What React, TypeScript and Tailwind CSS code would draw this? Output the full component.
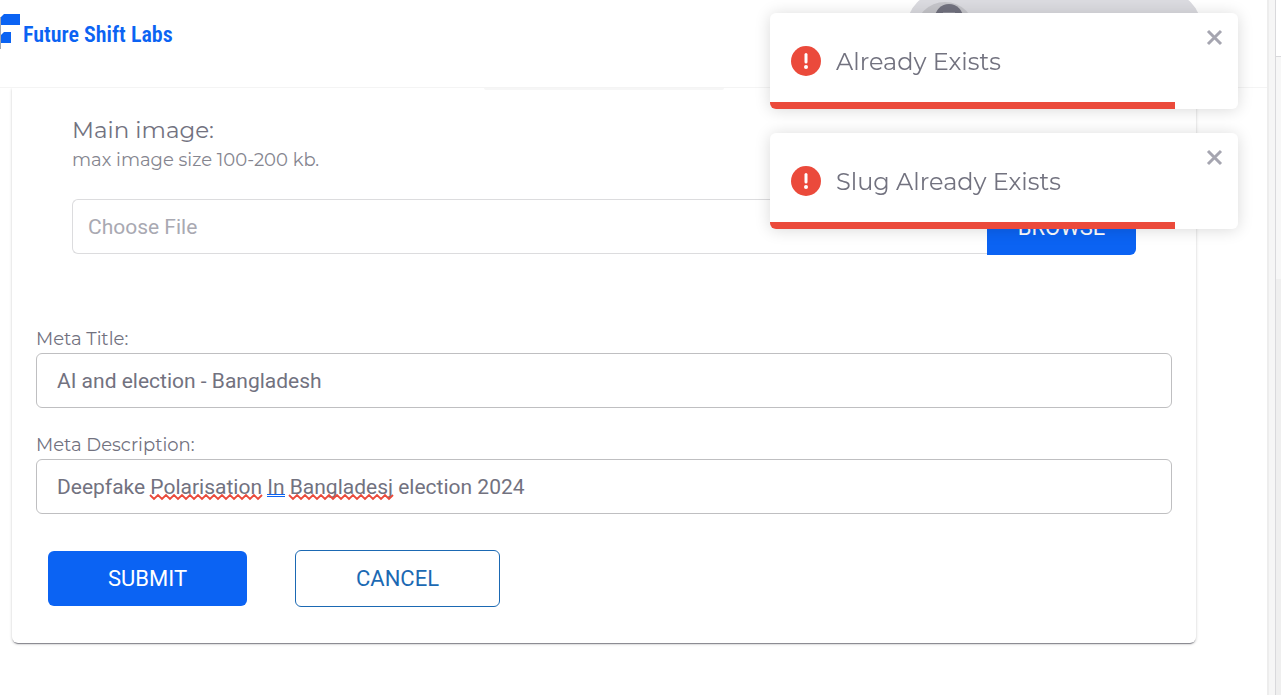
import React from "react";

const sans = "font-['Montserrat','Inter',sans-serif]";
const roboto = "font-['Roboto',sans-serif]";

function Logo() {
  return (
    <a href="#" className="flex items-start text-[#0b63f3]">
      <svg width="21" height="38" viewBox="0 0 21 38" aria-hidden="true">
        <path d="M0.5 4V36" stroke="#a3a6b0" strokeWidth="1" />
        <path d="M4 1H20V12H1V4Z" fill="#0b63f3" />
        <path d="M4 19H11V30H1V22Z" fill="#0b63f3" />
      </svg>
      <span className="ml-0.5 mt-2 whitespace-nowrap font-['Roboto_Condensed','Roboto',sans-serif] text-[22px] font-semibold leading-7">
        Future Shift Labs
      </span>
    </a>
  );
}

function ProfileChip() {
  return (
    <button
      type="button"
      aria-label="Profile"
      className="-mt-2 mr-[66px] flex h-[70px] w-[294px] items-start overflow-hidden rounded-full bg-[#dbdbe0] pl-2"
    >
      <svg width="60" height="70" viewBox="0 -8 60 70" aria-hidden="true">
        <circle cx="30" cy="32" r="30" fill="#c5c5ca" />
        <circle cx="34" cy="18" r="14" fill="#72727f" />
        <path d="M28 12h12v10H28z" fill="#92929c" />
      </svg>
    </button>
  );
}

function Toast({ message }: { message: string }) {
  return (
    <div
      role="alert"
      className="relative flex h-24 items-center overflow-hidden rounded-md bg-white pl-[21px] shadow-[0_1px_16px_rgba(0,0,0,0.15)]"
    >
      <svg width="30" height="30" viewBox="0 0 30 30" aria-hidden="true">
        <circle cx="15" cy="15" r="15" fill="#eb4a3b" />
        <path d="M15 8.5V16" stroke="#fff" strokeWidth="3" strokeLinecap="round" />
        <circle cx="15" cy="21" r="2" fill="#fff" />
      </svg>
      <span className={`${sans} ml-[15px] pt-0.5 text-2xl text-[#72727f]`}>{message}</span>
      <button type="button" aria-label="Close" className="absolute right-[15px] top-4">
        <svg width="17" height="17" viewBox="0 0 17 17" aria-hidden="true">
          <path d="M2 2L15 15M15 2L2 15" stroke="#a5a5b0" strokeWidth="3" />
        </svg>
      </button>
      <div className="absolute bottom-0 left-0 h-[7px] w-[86.6%] bg-[#eb4a3b]" />
    </div>
  );
}

function wave(x: number, end: number) {
  let d = `M${x} 2`;
  let down = true;
  for (let i = x + 4; i <= end; i += 4) {
    d += `L${i} ${down ? 6 : 2}`;
    down = !down;
  }
  return d;
}

function SpellingMarks() {
  return (
    <svg
      className="pointer-events-none absolute left-0 top-[34px]"
      width="500"
      height="8"
      viewBox="0 0 500 8"
      fill="none"
      aria-hidden="true"
    >
      <path d={wave(114, 226)} stroke="#eb4a3b" strokeWidth="1.8" />
      <path d="M231 1.5H249M231 3.5H249" stroke="#0b63f3" strokeWidth="1" />
      <path d={wave(253, 357)} stroke="#eb4a3b" strokeWidth="1.8" />
    </svg>
  );
}

function Field({
  id,
  label,
  value,
  children,
}: {
  id: string;
  label: string;
  value: string;
  children?: React.ReactNode;
}) {
  return (
    <div>
      <label htmlFor={id} className={`${sans} block text-lg leading-7 text-[#72727f]`}>
        {label}
      </label>
      <div className="relative">
        <input
          id={id}
          type="text"
          defaultValue={value}
          spellCheck={false}
          className={`${roboto} block h-[55px] w-full rounded-md border border-[#bfbfc1] bg-white px-5 text-[21px] text-[#72727f] outline-none`}
        />
        {children}
      </div>
    </div>
  );
}

export default function App() {
  return (
    <div className="flex min-h-screen bg-white">
      <div className="min-w-0 flex-1">
        <header className="flex h-[88px] items-start justify-between overflow-hidden border-b border-[#f4f4f4] bg-white">
          <div className="pt-[13px]">
            <Logo />
          </div>
          <ProfileChip />
        </header>

        <main className="pl-3 pr-[71px]">
          <form className="rounded-b-md px-6 pb-9 shadow-[0_2px_1px_-1px_rgba(60,60,75,0.55),0_1px_3px_rgba(0,0,0,0.22)] [clip-path:inset(0_-6px_-6px_-6px)]">
            <div className="mx-auto h-0.5 w-[240px] rounded-b bg-[#f6f6f6]" />
            <section className="px-9 pt-[25px]">
              <label htmlFor="file" className={`${sans} block text-[23px] leading-[30px] text-[#72727f]`}>
                Main image:
              </label>
              <p className={`${sans} text-lg leading-[30px] text-[#85858f]`}>max image size 100-200 kb.</p>
              <div className="mt-6 flex">
                <input
                  id="file"
                  type="text"
                  placeholder="Choose File"
                  className={`${roboto} h-[55px] min-w-0 flex-1 rounded-l-md border border-r-0 border-[#dcdcde] px-[15px] text-[21px] outline-none placeholder:text-[#a9a9b2]`}
                />
                <button
                  type="button"
                  className={`${roboto} h-14 w-[149px] rounded-br-md bg-[#0b63f3] text-[22px] text-white`}
                >
                  BROWSE
                </button>
              </div>
            </section>

            <div className="mt-[70px] flex flex-col gap-[23px]">
              <Field id="meta-title" label="Meta Title:" value="AI and election - Bangladesh" />
              <Field
                id="meta-description"
                label="Meta Description:"
                value="Deepfake Polarisation In Bangladesj election 2024"
              >
                <SpellingMarks />
              </Field>
            </div>

            <div className="mt-9 flex items-center gap-12 pl-3">
              <button
                type="submit"
                className={`${roboto} h-[55px] w-[199px] rounded-md bg-[#0b63f3] text-[22px] text-white`}
              >
                SUBMIT
              </button>
              <button
                type="button"
                className={`${roboto} h-[57px] w-[205px] rounded-md border border-[#1b69b3] bg-white text-[22px] text-[#1b69b3]`}
              >
                CANCEL
              </button>
            </div>
          </form>
        </main>
      </div>

      <aside aria-hidden="true" className="flex w-3.5 shrink-0">
        <div className="w-2 border-l-2 border-[#ededed] bg-[#f6f6f6]" />
        <div className="flex flex-1 flex-col border-l border-[#d9d9dc]">
          <div className="h-[57px] border-b border-[#d9d9dc] bg-white" />
          <div className="h-[222px] bg-[#f7f7f7]" />
          <div className="flex-1 bg-[#efefef]" />
        </div>
      </aside>

      <div className="fixed right-[43px] top-[13px] flex w-[468px] max-w-full flex-col gap-6">
        <Toast message="Already Exists" />
        <Toast message="Slug Already Exists" />
      </div>
    </div>
  );
}
